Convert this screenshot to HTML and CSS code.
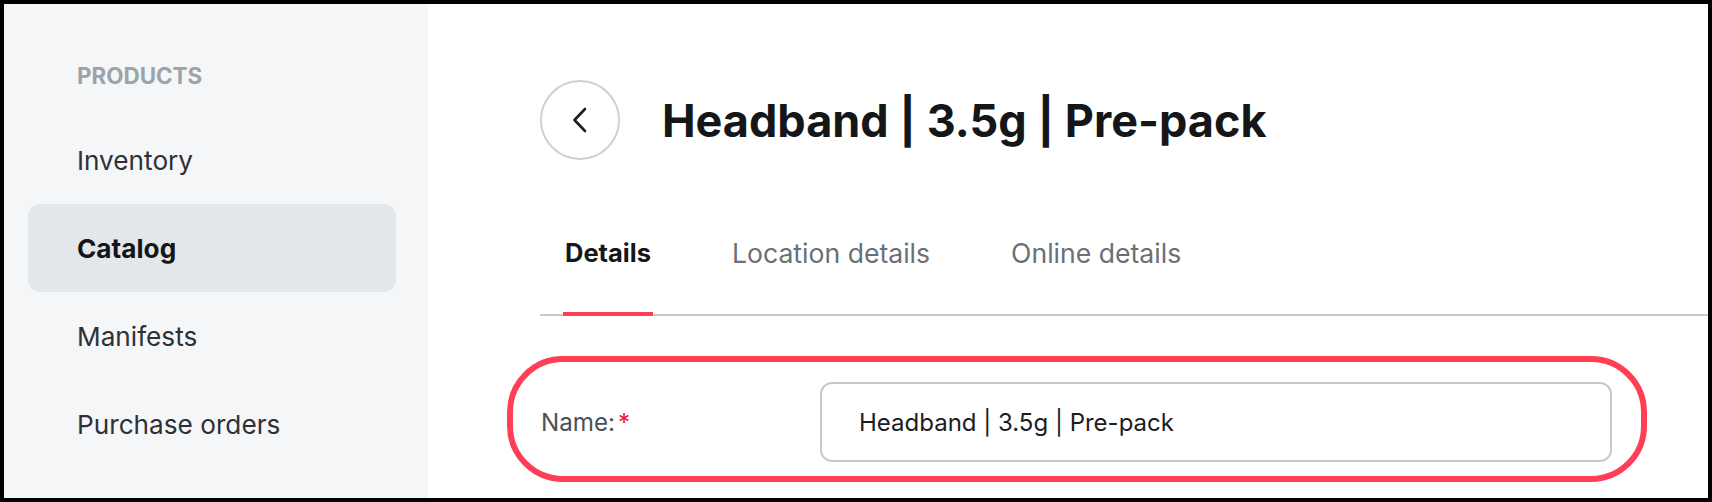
FILE: index.html
```html
<!DOCTYPE html>
<html lang="en">
<head>
    <meta charset="UTF-8">
    <title>Headband | 3.5g | Pre-pack</title>
    <link rel="stylesheet" href="styles.css">
</head>
<body>
    <div class="frame">
        <!-- 侧边导航 -->
        <aside class="sidebar">
            <div class="nav-title">PRODUCTS</div>
            <nav class="nav-list">
                <a class="nav-item">Inventory</a>
                <a class="nav-item active">Catalog</a>
                <a class="nav-item">Manifests</a>
                <a class="nav-item">Purchase orders</a>
            </nav>
        </aside>

        <main class="content">
            <div class="page-header">
                <button class="back-btn" aria-label="Back">
                    <svg width="16" height="26" viewBox="0 0 16 26">
                        <polyline points="13,2 2.5,13 13,24" fill="none" stroke="#1a1c1e" stroke-width="2.6" stroke-linecap="round" stroke-linejoin="round"/>
                    </svg>
                </button>
                <h1 class="page-title">Headband | 3.5g | Pre-pack</h1>
            </div>

            <div class="tabs">
                <div class="tab active">Details</div>
                <div class="tab">Location details</div>
                <div class="tab">Online details</div>
            </div>

            <div class="field-row">
                <label class="field-label" for="productName">Name:<span class="required">*</span></label>
                <input class="field-input" id="productName" type="text" value="Headband | 3.5g | Pre-pack">
            </div>
        </main>
    </div>
</body>
</html>
```

FILE: styles.css
```css
:root {
    --ink: #141618;
    --text: #2d3135;
    --muted: #697077;
    --line: #c6cacd;
    --accent: #ff3f56;
    --sidebar: #f5f6f8;
}
body {
    margin: 0;
    font-family: 'Inter', 'Noto Sans', sans-serif;
    background: #000;
}
.frame {
    display: flex;
    height: 502px;
    box-sizing: border-box;
    border: 4px solid #000;
    background: white;
    overflow: hidden;
}

/* sidebar */
.sidebar {
    width: 424px;
    flex-shrink: 0;
    background: var(--sidebar);
    padding-top: 58px;
    box-sizing: border-box;
}
.nav-title {
    padding-left: 73px;
    font-size: 22.4px;
    line-height: 27px;
    font-weight: 700;
    color: #9ca3a9;
    margin-bottom: 27px;
}
.nav-list {
    display: flex;
    flex-direction: column;
    margin: 0 32px 0 24px;
}
.nav-item {
    display: flex;
    align-items: center;
    height: 88px;
    box-sizing: border-box;
    padding: 1px 0 0 49px;
    border-radius: 12px;
    font-size: 26.2px;
    color: var(--text);
}
.nav-item.active {
    background: #e4e7ea;
    color: var(--ink);
    font-weight: 700;
}

/* main */
.content {
    flex: 1;
    padding: 76px 0 0 112px;
    min-width: 0;
}
.page-header {
    display: flex;
    align-items: center;
    gap: 42px;
}
.back-btn {
    width: 80px;
    height: 80px;
    border-radius: 50%;
    border: 2px solid #cdd1d4;
    background: white;
    display: flex;
    align-items: center;
    justify-content: center;
    padding: 0;
}
.page-title {
    margin: 0;
    font-size: 45px;
    font-weight: 700;
    color: var(--ink);
    white-space: nowrap;
}

.tabs {
    display: flex;
    gap: 77px;
    margin-top: 77px;
    padding-left: 23px;
    border-bottom: 2px solid var(--line);
}
.tab {
    padding: 0 2px 43px;
    font-size: 26.6px;
    line-height: 32px;
    color: var(--muted);
    border-bottom: 4px solid transparent;
    margin-bottom: -2px;
}
.tab.active {
    color: var(--ink);
    font-weight: 700;
    font-size: 25.5px;
    border-bottom-color: var(--accent);
}

.field-row {
    display: flex;
    align-items: center;
    margin: 40px 61px 0 -33px;
    padding: 20px 29px 14px 28px;
    border: 6px solid var(--accent);
    border-radius: 56px;
}
.field-label {
    width: 279px;
    flex-shrink: 0;
    font-size: 24.2px;
    color: #4b5157;
}
.required {
    color: #e8202f;
    margin-left: 3px;
}
.field-input {
    flex: 1;
    height: 80px;
    box-sizing: border-box;
    border: 2px solid var(--line);
    border-radius: 12px;
    padding: 0 0 0 37px;
    font-family: inherit;
    font-size: 24px;
    color: #1b1d1f;
    background: white;
}
```
